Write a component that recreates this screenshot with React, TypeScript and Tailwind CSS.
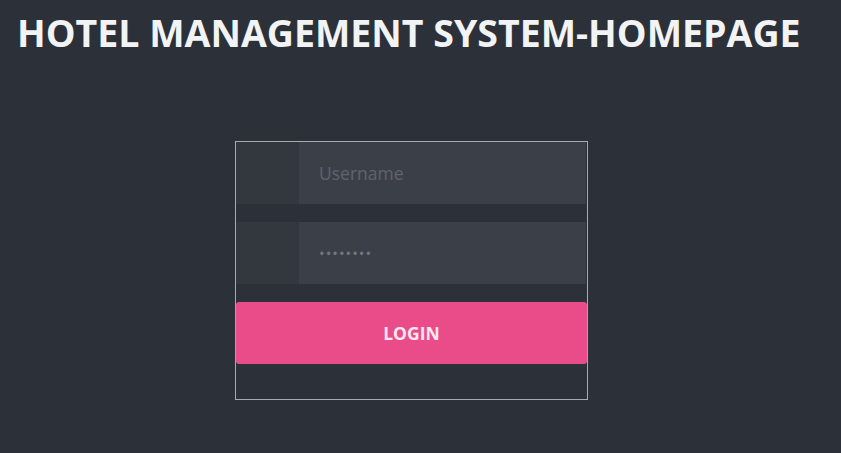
export default function App() {
  return (
    <div
      className="min-h-[453px] w-full bg-[#2c3038] text-white"
      style={{ fontFamily: '"Open Sans", "Liberation Sans", sans-serif' }}
    >
      <h1 className="pl-[17px] pt-[9px] text-[37.5px] font-bold leading-[48px] text-[#f2f3f5]">
        HOTEL MANAGEMENT SYSTEM-HOMEPAGE
      </h1>

      <div className="mt-[84px] ml-[235px] w-[353px] border border-[#a7aaaf] pb-[35px]">
        <div className="flex h-[62px] pr-px">
          <div className="w-[63px] bg-[#33373e]" />
          <input
            type="text"
            placeholder="Username"
            className="min-w-0 flex-1 bg-[#3b4048] px-[20px] text-[17.5px] text-[#c8ccd2] outline-none placeholder:text-[#5f646c]"
          />
        </div>
        <div className="mt-[18px] flex h-[62px] pr-px">
          <div className="w-[63px] bg-[#33373e]" />
          <input
            type="password"
            defaultValue="password"
            className="min-w-0 flex-1 bg-[#3b4048] px-[20px] text-[15px] tracking-[1px] text-[#737880] outline-none"
          />
        </div>
        <button className="mt-[18px] flex h-[62px] w-full items-center justify-center rounded-[3px] bg-[#ea4c89] text-[17.5px] font-bold text-[#fde8f0]">
          LOGIN
        </button>
      </div>
    </div>
  );
}
